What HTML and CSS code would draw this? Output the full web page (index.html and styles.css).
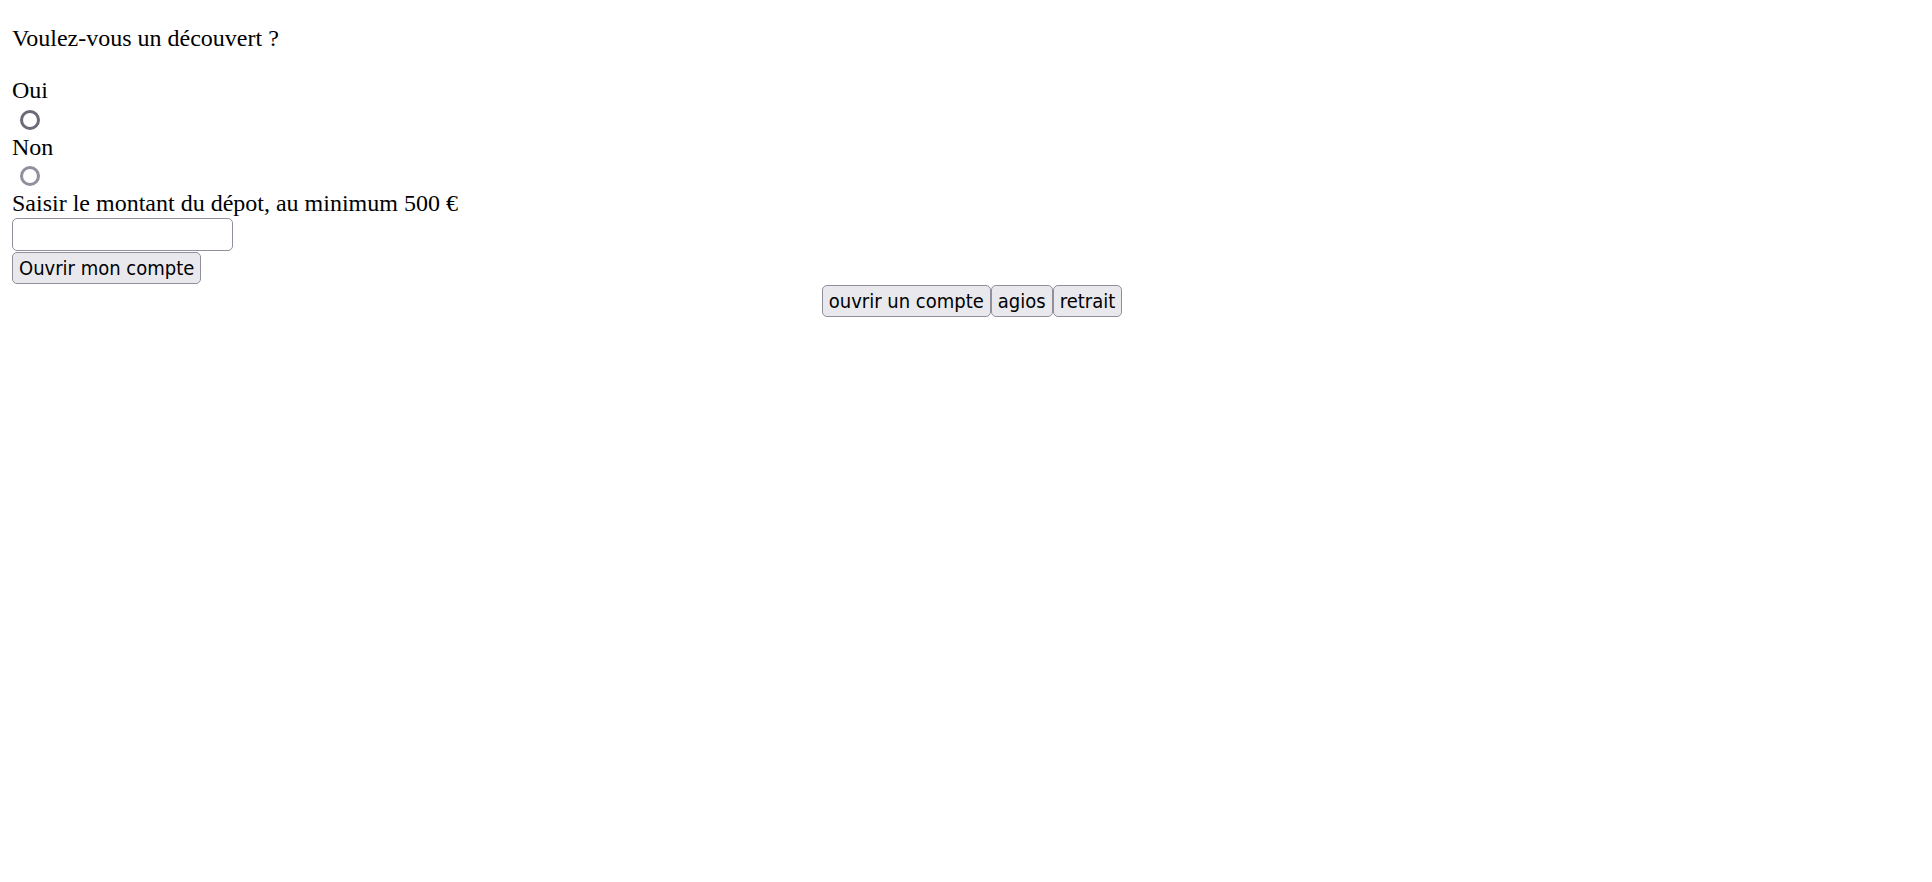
FILE: index.html
```html
<!DOCTYPE html>
<html lang="fr">
<head>
<meta charset="utf-8">
<title>Compte</title>
<link rel="stylesheet" href="styles.css">
</head>
<body>
<div class="page">
  <form class="form">
    <p class="question">Voulez-vous un découvert ?</p>
    <label class="line" for="oui">Oui</label>
    <div class="radio-row"><input class="radio radio-dark" type="radio" id="oui" name="dec"></div>
    <label class="line" for="non">Non</label>
    <div class="radio-row"><input class="radio" type="radio" id="non" name="dec"></div>
    <label class="line" for="montant">Saisir le montant du dépot, au minimum 500 €</label>
    <input class="amount" type="text" id="montant">
    <div><button class="btn btn-submit" type="button">Ouvrir mon compte</button></div>
  </form>
  <nav class="nav">
    <button class="btn" type="button">ouvrir un compte</button><button class="btn" type="button">agios</button><button class="btn" type="button">retrait</button>
  </nav>
</div>
</body>
</html>
```

FILE: styles.css
```css
html, body {
  margin: 0;
  padding: 0;
  background: #ffffff;
}

.page {
  padding: 24px 12px 0 12px;
  font-family: "Liberation Serif", "Times New Roman", serif;
  font-size: 24px;
  line-height: 28px;
  color: #000000;
}

.form {
  display: flex;
  flex-direction: column;
  align-items: flex-start;
}

.question {
  margin: 0 0 24px 0;
}

.line {
  display: block;
  height: 28px;
}

.radio-row {
  height: 28.5px;
}

.radio {
  -webkit-appearance: none;
  appearance: none;
  display: block;
  box-sizing: border-box;
  width: 20px;
  height: 20px;
  margin: 5.5px 0 0 8px;
  border: 3px solid #8f8f9d;
  border-radius: 50%;
  background: #ffffff;
}

.radio-dark {
  border-color: #6b6b78;
}

.amount {
  box-sizing: border-box;
  width: 221px;
  height: 33px;
  margin: 1px 0 0 0;
  padding: 2px 4px;
  border: 1px solid #8f8f9d;
  border-radius: 5px;
  background: #ffffff;
  font-family: "DejaVu Sans Condensed", "DejaVu Sans", sans-serif;
  font-size: 19.5px;
}

.btn {
  box-sizing: border-box;
  height: 32px;
  margin: 0;
  padding: 4px 6px;
  border: 1px solid #8f8f9d;
  border-radius: 5px;
  background: #e9e9ed;
  color: #000000;
  font-family: "DejaVu Sans Condensed", "DejaVu Sans", sans-serif;
  font-size: 20px;
  line-height: 22px;
}

.btn-submit {
  margin-top: 1px;
}

.nav {
  display: flex;
  justify-content: center;
  padding-left: 12px;
  margin-top: 1px;
}
```
